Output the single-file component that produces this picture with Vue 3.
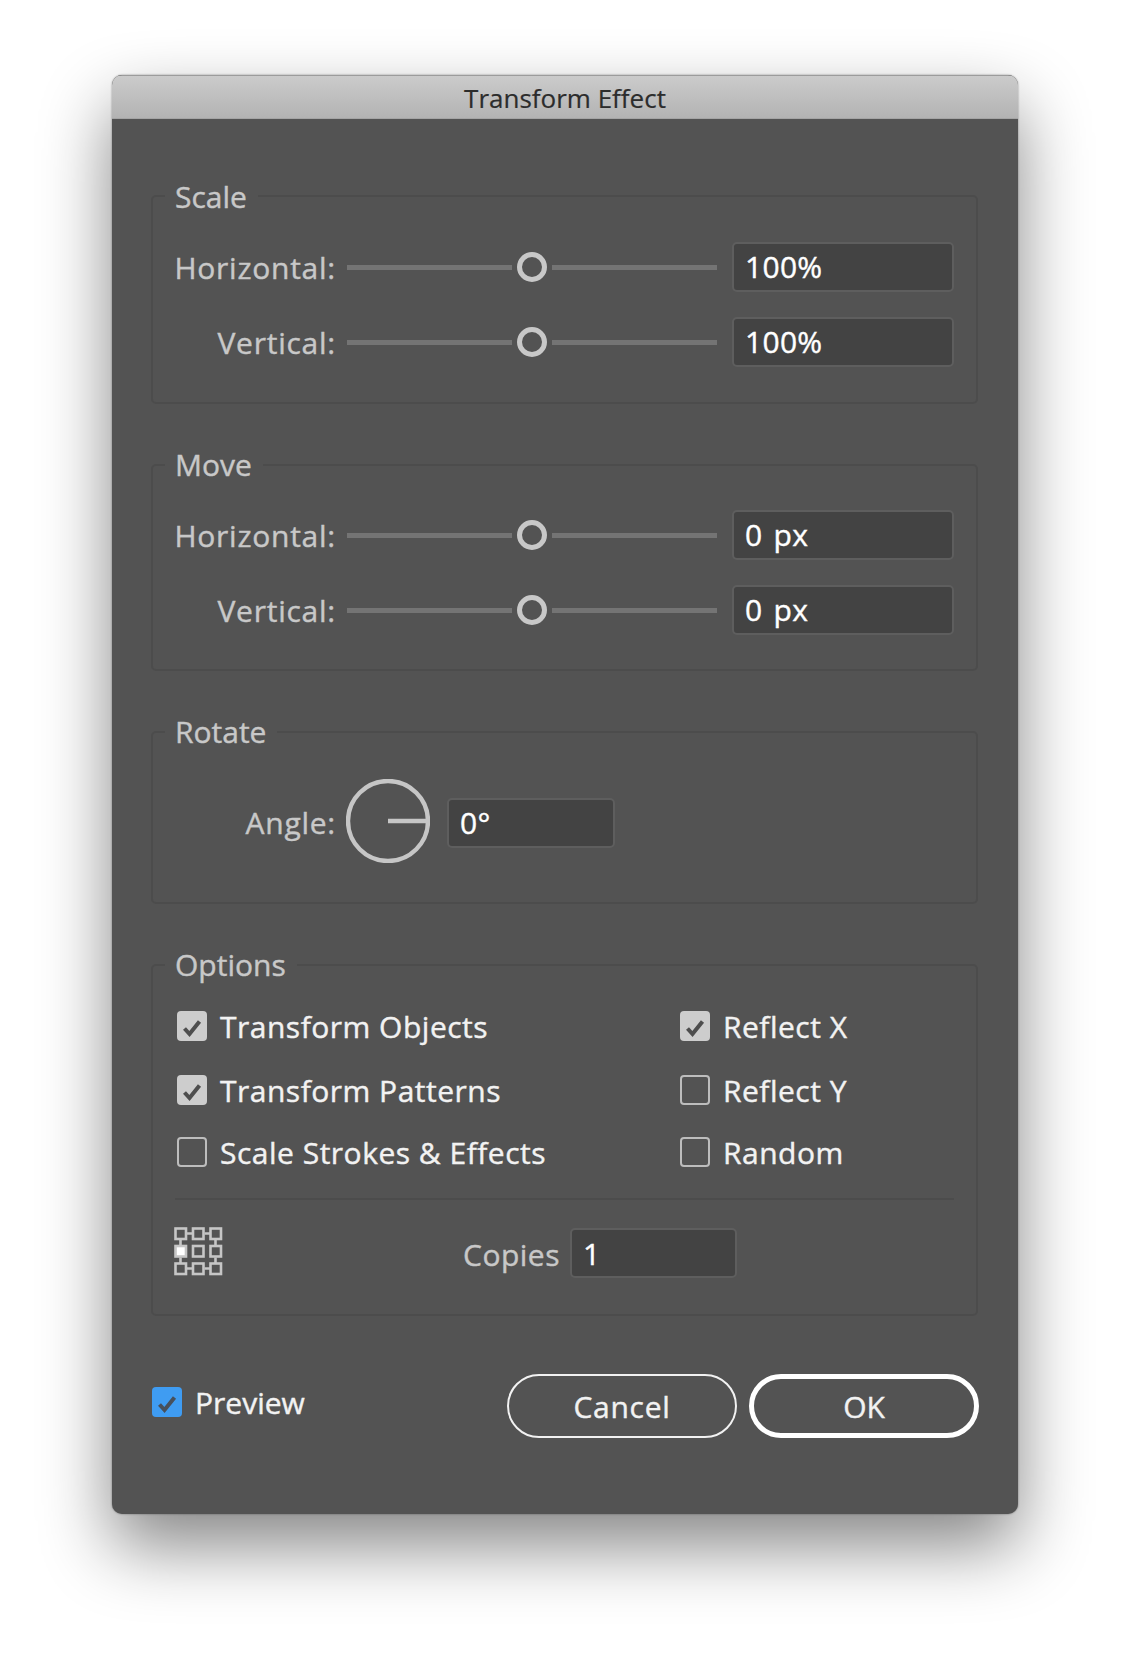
<script setup>
const scaleRows = [
  { label: 'Horizontal:', value: '100%' },
  { label: 'Vertical:', value: '100%' },
]
const moveRows = [
  { label: 'Horizontal:', value: '0 px' },
  { label: 'Vertical:', value: '0 px' },
]
const options = [
  [{ label: 'Transform Objects', on: true }, { label: 'Reflect X', on: true }],
  [{ label: 'Transform Patterns', on: true }, { label: 'Reflect Y', on: false }],
  [{ label: 'Scale Strokes & Effects', on: false }, { label: 'Random', on: false }],
]
const cells = []
for (let r = 0; r < 3; r++) for (let c = 0; c < 3; c++) cells.push({ x: 1.5 + c * 17.5, y: 1.5 + r * 17.5, on: r === 1 && c === 0 })
</script>

<template>
  <div class="page">
    <div class="dialog">
      <div class="title">Transform Effect</div>
      <div class="body">
        <section class="group g-scale">
          <h3 class="legend">Scale</h3>
          <div v-for="row in scaleRows" :key="row.label" class="row">
            <span class="label">{{ row.label }}</span>
            <div class="slider"><i class="seg"></i><i class="knob"></i><i class="seg"></i></div>
            <div class="field wide">{{ row.value }}</div>
          </div>
        </section>

        <section class="group g-move">
          <h3 class="legend">Move</h3>
          <div v-for="row in moveRows" :key="row.label" class="row">
            <span class="label">{{ row.label }}</span>
            <div class="slider"><i class="seg"></i><i class="knob"></i><i class="seg"></i></div>
            <div class="field wide">{{ row.value }}</div>
          </div>
        </section>

        <section class="group g-rotate">
          <h3 class="legend">Rotate</h3>
          <div class="angle-row">
            <span class="label angle-label">Angle:</span>
            <svg class="dial" width="84" height="84" viewBox="0 0 84 84">
              <circle cx="42" cy="42" r="40" fill="none" stroke="#c6c6c6" stroke-width="4.4" />
              <line x1="42" y1="42" x2="80" y2="42" stroke="#c6c6c6" stroke-width="4.6" />
            </svg>
            <div class="field angle">0°</div>
          </div>
        </section>

        <section class="group g-options">
          <h3 class="legend">Options</h3>
          <div v-for="(pair, i) in options" :key="i" class="check-row">
            <label v-for="opt in pair" :key="opt.label" class="check">
              <span class="box" :class="{ on: opt.on }">
                <svg v-if="opt.on" width="30" height="30" viewBox="0 0 30 30">
                  <path d="M7.5 15.5 L12.5 21 L22.5 8.5" fill="none" stroke="#4e4e4e" stroke-width="4" />
                </svg>
              </span>
              <span class="check-text">{{ opt.label }}</span>
            </label>
          </div>
          <div class="divider"></div>
          <div class="copies-row">
            <svg class="grid-icon" width="49" height="49" viewBox="0 0 49 49">
              <g stroke="#c6c6c6" stroke-width="2.6" fill="none">
                <path d="M13 6.5H19M30.5 6.5H36.5M13 41.5H19M30.5 41.5H36.5M6.5 13V19M6.5 30.5V36M41.5 13V19M41.5 30.5V36" />
                <rect v-for="(c, i) in cells" :key="i" :x="c.x" :y="c.y" width="10.5" height="10.5" :fill="c.on ? '#ffffff' : 'none'" />
              </g>
            </svg>
            <span class="copies-label">Copies</span>
            <div class="field copies">1</div>
          </div>
        </section>

        <div class="footer">
          <label class="check preview">
            <span class="box blue">
              <svg width="30" height="30" viewBox="0 0 30 30">
                <path d="M7.5 15.5 L12.5 21 L22.5 8.5" fill="none" stroke="#47505c" stroke-width="4" />
              </svg>
            </span>
            <span class="check-text plain">Preview</span>
          </label>
          <button class="btn cancel">Cancel</button>
          <button class="btn ok">OK</button>
        </div>
      </div>
    </div>
  </div>
</template>

<style>
html, body { margin: 0; background: #ffffff; }
</style>

<style scoped>
.page {
  width: 1130px;
  height: 1662px;
  box-sizing: border-box;
  padding: 75px 0 0 112px;
  background: #fff;
  font-family: "Open Sans", "DejaVu Sans", sans-serif;
  -webkit-text-stroke: 0.4px;
  overflow: hidden;
}
.dialog {
  width: 906px;
  height: 1439px;
  border-radius: 10px;
  background: #535353;
  box-shadow: 0 32px 70px rgba(0, 0, 0, 0.48), 0 0 2px rgba(0, 0, 0, 0.45);
  overflow: hidden;
}
.title {
  height: 44px;
  box-sizing: border-box;
  border-top: 1px solid #9c9c9c;
  border-bottom: 1px solid #a4a4a4;
  background: linear-gradient(#cbcbcb, #b3b3b3);
  color: #2c2c2c;
  font-size: 26px;
  line-height: 44px;
  text-align: center;
  -webkit-text-stroke: 0.2px;
}
.body {
  padding: 76px 40px 0 39px;
}
.group {
  position: relative;
  box-sizing: border-box;
  border: 2px solid #4c4c4c;
  border-radius: 5px;
}
.legend {
  position: absolute;
  left: 12px;
  top: -22px;
  margin: 0;
  padding: 0 11px 0 10px;
  background: #535353;
  color: #c8c8c8;
  font-size: 30px;
  font-weight: 400;
  line-height: 42px;
}
.g-scale .legend { top: -21px; }
.g-scale { height: 209px; padding-top: 45px; margin-bottom: 60px; }
.g-move { height: 207px; padding-top: 44px; margin-bottom: 60px; }
.g-rotate { height: 173px; padding-top: 46px; margin-bottom: 60px; }
.g-options { height: 352px; padding: 45px 0 0; }
.row {
  display: flex;
  align-items: center;
  height: 50px;
  margin-bottom: 25px;
}
.label {
  width: 183px;
  flex: none;
  color: #c8c8c8;
  font-size: 30px;
  letter-spacing: 0.75px;
  text-align: right;
}
.slider {
  display: flex;
  align-items: center;
  gap: 5px;
  width: 370px;
  margin: 0 15px 0 11px;
}
.seg {
  flex: 1;
  height: 5px;
  background: #747474;
}
.knob {
  flex: none;
  width: 30px;
  height: 30px;
  box-sizing: border-box;
  border: 5px solid #c8c8c8;
  border-radius: 50%;
}
.field {
  box-sizing: border-box;
  height: 50px;
  border: 2px solid #5e5e5e;
  border-radius: 5px;
  background: #434343;
  color: #fff;
  font-size: 30px;
  line-height: 45px;
  padding-left: 11px;
  word-spacing: 3px;
  letter-spacing: 0.3px;
}
.wide { width: 222px; }
.angle-row {
  display: flex;
  align-items: center;
  height: 84px;
}
.angle-label { margin-top: 2px; }
.dial { flex: none; margin: 0 16px 0 10px; }
.angle { width: 168px; margin: 3px 0 0 1px; }
.check-row {
  display: flex;
  height: 30px;
  margin-bottom: 34px;
  padding-left: 24px;
}
.check-row:nth-child(3) { margin-bottom: 32px; }
.check-row:nth-child(4) { margin-bottom: 31px; }
.check {
  display: flex;
  align-items: center;
  color: #f2f2f2;
  font-size: 30px;
  width: 503px;
  flex: none;
}
.box {
  flex: none;
  width: 30px;
  height: 30px;
  box-sizing: border-box;
  border: 2px solid #bdbdbd;
  border-radius: 4px;
}
.box.on {
  border: none;
  background: #cdcdcd;
}
.box.blue {
  border: none;
  background: #3f9cf2;
}
.check-text {
  margin-left: 13px;
  letter-spacing: 0.5px;
  white-space: nowrap;
}
.check-text.plain { letter-spacing: 0; }
.divider {
  height: 2px;
  margin: 0 22px 28px 22px;
  background: #4c4c4c;
}
.copies-row {
  display: flex;
  align-items: center;
  height: 50px;
  padding-left: 21px;
}
.grid-icon { flex: none; margin-top: -4px; }
.copies-label {
  margin: 3px 0 0 240px;
  color: #c8c8c8;
  font-size: 30px;
  letter-spacing: 0.5px;
}
.copies {
  width: 167px;
  margin-left: 10px;
  line-height: 47px;
}
.footer {
  display: flex;
  align-items: center;
  height: 64px;
  margin-top: 58px;
}
.preview {
  width: 355px;
  margin: -8px 0 0 1px;
}
.btn {
  flex: none;
  box-sizing: border-box;
  width: 230px;
  height: 64px;
  border-radius: 32px;
  background: transparent;
  color: #f2f2f2;
  font-family: inherit;
  font-size: 30px;
  padding: 0;
  -webkit-text-stroke: 0.4px;
}
.cancel { border: 2px solid #f2f2f2; letter-spacing: 0.7px; }
.ok { margin-left: 12px; border: 5px solid #fff; }
</style>
